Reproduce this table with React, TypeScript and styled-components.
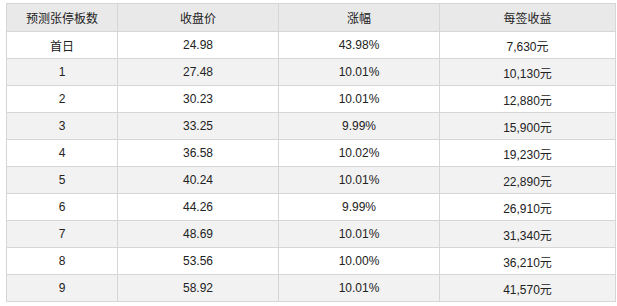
import React from "react";
import styled, { createGlobalStyle } from "styled-components";

const GlobalStyle = createGlobalStyle`
	body {
		margin: 0;
		background: #ffffff;
		font-family: "Liberation Sans", Arial, "Noto Sans CJK SC", sans-serif;
	}
`;

const Page = styled.div`
	padding: 3px 0 0 6px;
`;

const Table = styled.table`
	border-collapse: collapse;
	table-layout: fixed;
	width: 609px;
	font-size: 12px;
	color: #222;
`;

const HeadCell = styled.th`
	height: 27px;
	padding: 0;
	border: 1px solid #d6d6d6;
	background: #e9e9e9;
	font-weight: normal;
	text-align: center;
`;

const Row = styled.tr<{ $alt: boolean }>`
	background: ${(p) => (p.$alt ? "#f2f2f2" : "#ffffff")};
`;

const Cell = styled.td`
	height: 26px;
	padding: 0;
	border: 1px solid #d6d6d6;
	text-align: center;
`;

const rows = [
	["首日", "24.98", "43.98%", "7,630元"],
	["1", "27.48", "10.01%", "10,130元"],
	["2", "30.23", "10.01%", "12,880元"],
	["3", "33.25", "9.99%", "15,900元"],
	["4", "36.58", "10.02%", "19,230元"],
	["5", "40.24", "10.01%", "22,890元"],
	["6", "44.26", "9.99%", "26,910元"],
	["7", "48.69", "10.01%", "31,340元"],
	["8", "53.56", "10.00%", "36,210元"],
	["9", "58.92", "10.01%", "41,570元"]
];

const App = () => (
	<Page>
		<GlobalStyle />
		<Table>
			<colgroup>
				<col style={{ width: 111 }} />
				<col style={{ width: 161 }} />
				<col style={{ width: 161 }} />
				<col style={{ width: 176 }} />
			</colgroup>
			<thead>
				<tr>
					<HeadCell>预测张停板数</HeadCell>
					<HeadCell>收盘价</HeadCell>
					<HeadCell>涨幅</HeadCell>
					<HeadCell>每签收益</HeadCell>
				</tr>
			</thead>
			<tbody>
				{rows.map((r, i) => (
					<Row key={i} $alt={i % 2 === 1}>
						{r.map((c, j) => (
							<Cell key={j}>{c}</Cell>
						))}
					</Row>
				))}
			</tbody>
		</Table>
	</Page>
);

export default App;
